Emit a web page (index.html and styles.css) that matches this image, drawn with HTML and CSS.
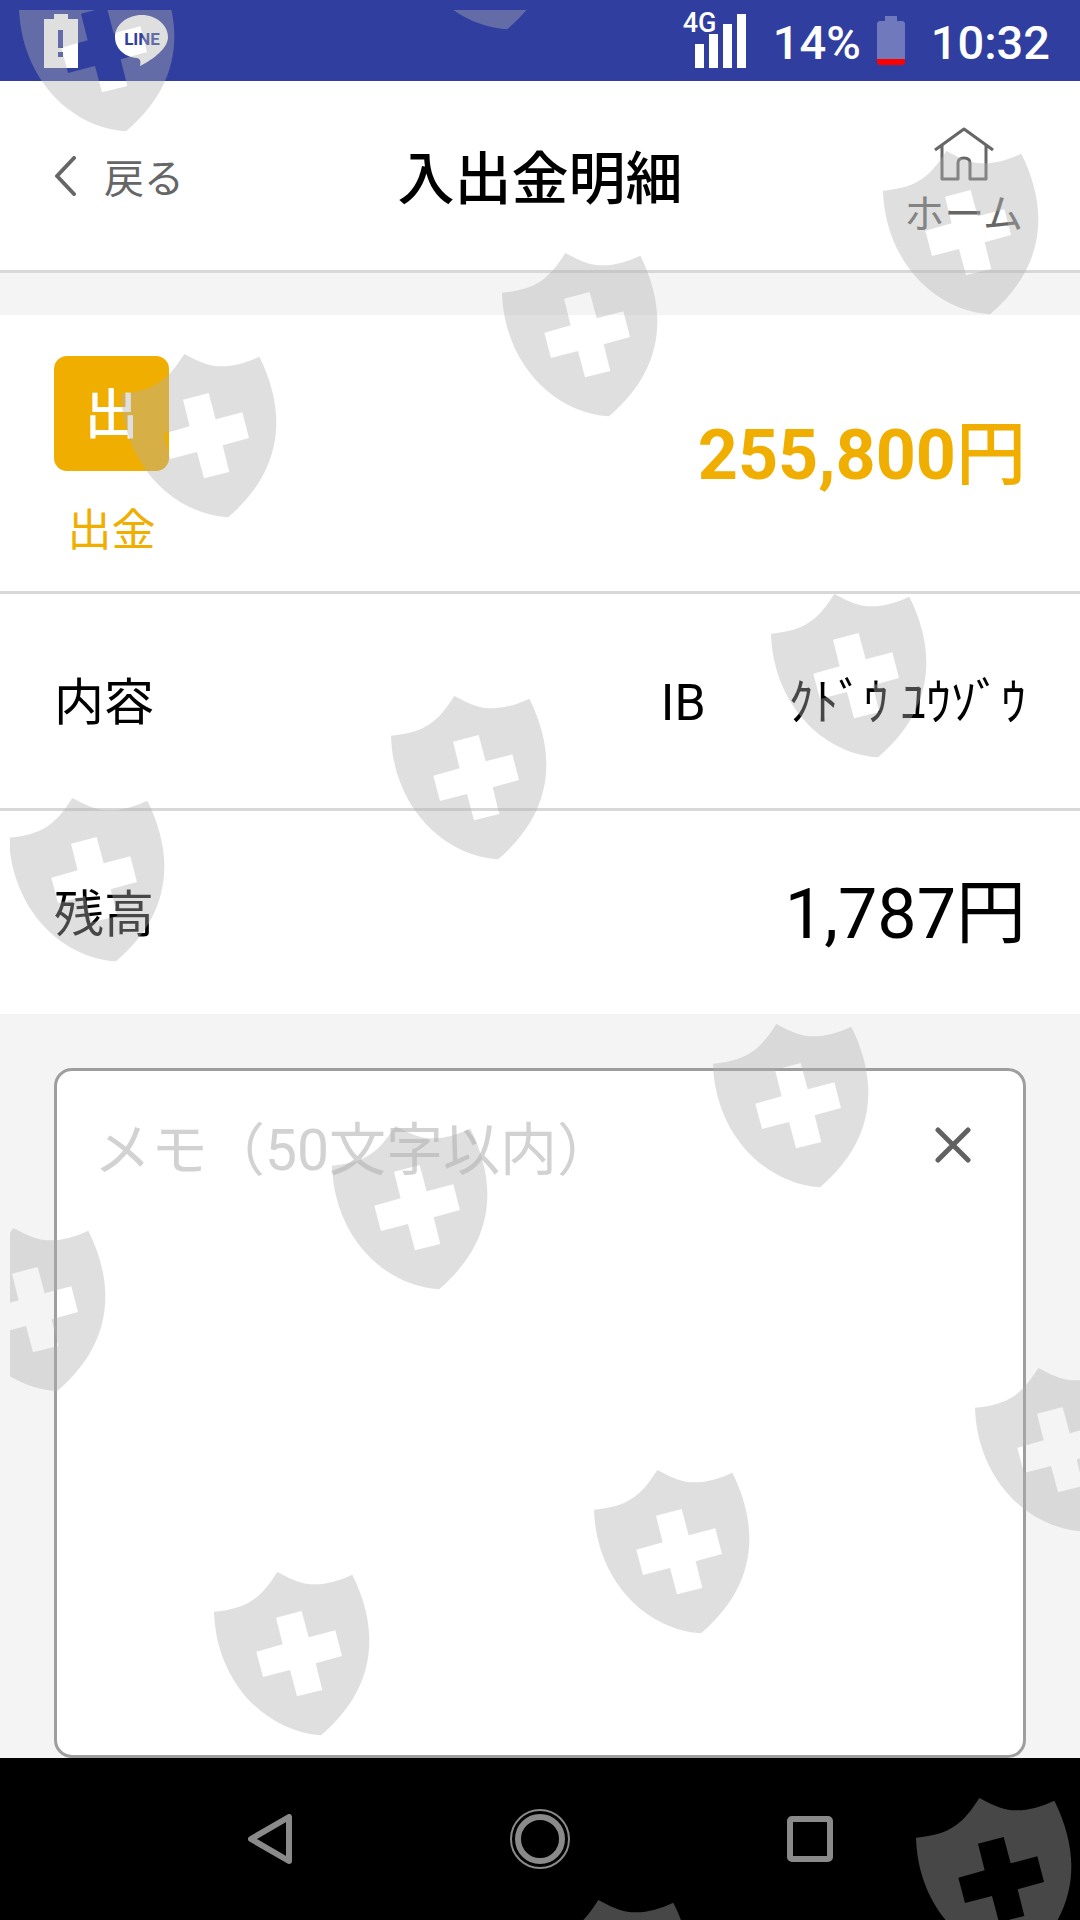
FILE: index.html
```html
<!DOCTYPE html>
<html lang="ja">
<head>
  <meta charset="UTF-8">
  <meta name="viewport" content="width=device-width, initial-scale=1.0">
  <title>入出金明細</title>
  <link rel="stylesheet" href="styles.css">
</head>
<body>
  <div class="status-bar">
    <div class="status-left">
      <svg width="34" height="54" viewBox="0 0 34 54">
        <path fill="#fff" fill-rule="evenodd" d="M10 0h14v5h10v49H0V5h10zM14 16v18h5V16zM14 38v5h5v-5z"/>
      </svg>
      <svg class="line-icon" width="54" height="52" viewBox="0 0 54 52">
        <path fill="#fff" d="M27 0C12 0 0 10 0 22c0 11 9 20 22 21 3 1 4 2 3 8 14-7 28-18 28-29C53 10 41 0 27 0z"/>
        <text class="line-text" x="27" y="30" text-anchor="middle">LINE</text>
      </svg>
    </div>
    <div class="status-right">
      <div class="signal">
        <span class="network">4G</span>
        <svg width="51" height="54" viewBox="0 0 51 54">
          <path fill="#fff" d="M0 30h9v24H0zM14 20h9v34h-9zM28 10h9v44h-9zM42 0h9v54h-9z"/>
        </svg>
      </div>
      <span class="percent">14%</span>
      <svg class="battery" width="28" height="49" viewBox="0 0 28 49">
        <path fill="#6f79bb" d="M8 0h12v5h6l2 2v36H0V7l2-2h6z"/>
        <path fill="#f00" d="M0 43h28v4l-2 2H2l-2-2z"/>
      </svg>
      <span class="time">10:32</span>
    </div>
  </div>

  <header class="header">
    <a href="#" class="back">
      <svg width="22" height="40" viewBox="0 0 22 40">
        <path d="M20 2 3 20l17 18" fill="none" stroke="#666" stroke-width="4" stroke-linecap="round" stroke-linejoin="round"/>
      </svg>
      戻る
    </a>
    <h1>入出金明細</h1>
    <a href="#" class="home">
      <svg width="60" height="54" viewBox="0 0 60 54">
        <path d="M1 23 30 2l29 21M8 18v34h16V36q0-5 6-5t6 5v16h16V18" fill="none" stroke="#666" stroke-width="3" stroke-linejoin="round"/>
      </svg>
      ホーム
    </a>
  </header>

  <main class="content">
    <section class="details">
      <div class="row amount-row">
        <div class="kind">
          <span class="badge">出</span>
          <span class="kind-label">出金</span>
        </div>
        <p class="amount withdraw">255,800<span class="yen">円</span></p>
      </div>
      <div class="row detail-row">
        <span class="label">内容</span>
        <span class="value"><span class="channel">IB</span>ｸﾄﾞｳ ﾕｳｿﾞｳ</span>
      </div>
      <div class="row balance-row">
        <span class="label">残高</span>
        <span class="amount">1,787円</span>
      </div>
    </section>

    <div class="memo">
      <textarea class="memo-text" aria-label="メモ" maxlength="50" placeholder="メモ（50文字以内）"></textarea>
      <button type="button" class="clear-btn" aria-label="クリア">
        <svg width="36" height="36" viewBox="0 0 36 36">
          <path d="M3 3l30 30M33 3 3 33" stroke="#616161" stroke-width="5" stroke-linecap="round"/>
        </svg>
      </button>
    </div>
  </main>

  <nav class="nav-bar">
    <button type="button" aria-label="戻る">
      <svg width="44" height="50" viewBox="0 0 44 50">
        <path d="M41 3v44L3 25z" fill="none" stroke="#8a8a8a" stroke-width="6" stroke-linejoin="round"/>
      </svg>
    </button>
    <button type="button" aria-label="ホーム">
      <svg width="60" height="60" viewBox="0 0 60 60" fill="none" stroke="#8a8a8a">
        <circle cx="30" cy="30" r="29" stroke-width="2"/>
        <circle cx="30" cy="30" r="22" stroke-width="6"/>
      </svg>
    </button>
    <button type="button" aria-label="アプリ履歴">
      <svg width="46" height="46" viewBox="0 0 46 46">
        <rect x="3" y="3" width="40" height="40" rx="2" fill="none" stroke="#8a8a8a" stroke-width="6"/>
      </svg>
    </button>
  </nav>

  <!-- shield pattern over the whole screen -->
  <div class="shields">
    <svg width="100%" height="100%">
      <defs>
        <symbol id="shield" viewBox="0 0 468 492">
          <path fill-rule="evenodd" d="M190 0C240 27 265 37 303 37C340 37 378 25 415 8C447 72 466 140 466 205C466 315 415 410 321 490C150 478 6 325 0 119C105 110 142 75 190 0ZM186 137L206 217L127 239L147 315L228 294L249 373L325 354L305 274L384 252L364 175L284 196L263 117Z"/>
        </symbol>
      </defs>
      <use href="#shield" x="9" y="-42" width="156" height="164"/>
      <use href="#shield" x="390" y="-144" width="156" height="164"/>
      <use href="#shield" x="873" y="141" width="156" height="164"/>
      <use href="#shield" x="492" y="243" width="156" height="164"/>
      <use href="#shield" x="111" y="344" width="156" height="164"/>
      <use href="#shield" x="761" y="584" width="156" height="164"/>
      <use href="#shield" x="381" y="686" width="156" height="164"/>
      <use href="#shield" x="-1" y="788" width="156" height="164"/>
      <use href="#shield" x="703" y="1014" width="156" height="164"/>
      <use href="#shield" x="322" y="1116" width="156" height="164"/>
      <use href="#shield" x="-60" y="1218" width="156" height="164"/>
      <use href="#shield" x="965" y="1358" width="156" height="164"/>
      <use href="#shield" x="584" y="1460" width="156" height="164"/>
      <use href="#shield" x="204" y="1562" width="156" height="164"/>
      <use href="#shield" x="906" y="1788" width="156" height="164"/>
      <use href="#shield" x="525" y="1890" width="156" height="164"/>
    </svg>
  </div>
</body>
</html>
```
FILE: styles.css
```css
* {
  box-sizing: border-box;
}

body {
  margin: 0;
  position: relative;
  min-height: 100vh;
  display: flex;
  flex-direction: column;
  font-family: Roboto, "Noto Sans CJK JP", sans-serif;
  background-color: #f4f4f4;
  color: #000;
}

svg {
  display: block;
  flex-shrink: 0;
}

button {
  background: none;
  border: none;
  padding: 0;
  cursor: pointer;
}

.status-bar {
  height: 81px;
  background-color: #303f9f;
  color: #fff;
  display: flex;
  justify-content: space-between;
  padding: 0 30px 0 44px;
  font-size: 47px;
  font-weight: 500;
}

.status-left, .status-right {
  display: flex;
  align-items: center;
}

.status-left {
  gap: 37px;
}

.line-text {
  font-size: 17px;
  font-weight: bold;
  fill: #303f9f;
}

.signal {
  position: relative;
  margin-right: 27px;
}

.network {
  position: absolute;
  left: -12px;
  top: -7px;
  font-size: 27px;
  line-height: 32px;
}

.battery {
  margin: 0 26px 0 16px;
}

.percent, .time {
  padding-top: 4px;
}

.header {
  height: 192px;
  background-color: #fff;
  border-bottom: 3px solid #d8d8d8;
  display: grid;
  grid-template-columns: 1fr auto 1fr;
  align-items: center;
  padding: 0 54px;
}

.header h1 {
  margin: 0;
  padding-bottom: 4px;
  font-size: 57px;
  font-weight: 500;
}

.header a {
  color: #666;
  font-size: 40px;
  text-decoration: none;
}

.back {
  display: flex;
  align-items: center;
  gap: 28px;
}

.home {
  justify-self: end;
  display: flex;
  flex-direction: column;
  align-items: center;
  gap: 4px;
  padding: 20px 3px 0 0;
  line-height: 60px;
}

.content {
  flex: 1;
  display: flex;
  flex-direction: column;
  padding-top: 42px;
}

.details {
  background-color: #fff;
}

.row {
  display: flex;
  align-items: center;
  justify-content: space-between;
  padding: 0 54px 6px;
  border-bottom: 3px solid #d8d8d8;
}

.amount-row {
  height: 279px;
}

.detail-row {
  height: 217px;
}

.balance-row {
  height: 203px;
  border-bottom: none;
}

.kind {
  display: flex;
  flex-direction: column;
  align-items: center;
  gap: 30px;
  padding-top: 16px;
}

.badge {
  width: 115px;
  height: 115px;
  border-radius: 13px;
  background-color: #f0ae00;
  color: #fff;
  font-size: 54px;
  font-weight: 500;
  line-height: 119px;
  text-align: center;
}

.kind-label {
  color: #f0ae00;
  font-size: 44px;
  line-height: 60px;
}

.label, .value {
  font-size: 50px;
}

.channel {
  margin-right: 83px;
}

.amount {
  margin: 0;
  padding-bottom: 4px;
  font-size: 70px;
}

.withdraw {
  color: #f0ae00;
  font-weight: bold;
}

.yen {
  font-weight: 500;
}

.memo {
  flex: 1;
  display: flex;
  align-items: flex-start;
  margin: 54px 54px 0;
  padding: 38px 52px 20px 37px;
  background-color: #fff;
  border: 3px solid #9e9e9e;
  border-radius: 18px;
}

.memo-text {
  flex: 1;
  align-self: stretch;
  min-width: 0;
  padding: 0;
  border: none;
  outline: none;
  resize: none;
  background: none;
  font-family: inherit;
  font-size: 57px;
  line-height: 84px;
}

.memo-text::placeholder {
  color: #d2d2d2;
}

.clear-btn {
  padding-top: 18px;
}

.nav-bar {
  height: 162px;
  background-color: #000;
  display: flex;
  padding: 0 135px;
}

.nav-bar button {
  flex: 1;
  display: flex;
  align-items: center;
  justify-content: center;
}

.shields {
  position: absolute;
  inset: 10px 0 0 10px;
  overflow: hidden;
  pointer-events: none;
  fill: #b1b1b1;
  opacity: 0.4;
}
```
